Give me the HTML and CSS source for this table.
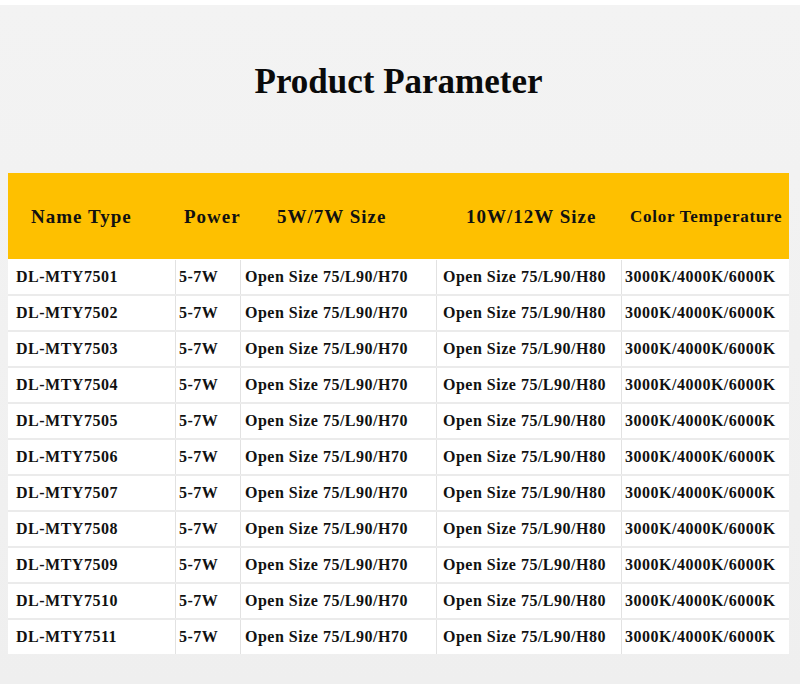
FILE: index.html
```html
<!DOCTYPE html>
<html lang="en">
<head>
<meta charset="utf-8">
<title>Product Parameter</title>
<link rel="stylesheet" href="styles.css">
</head>
<body>
<div class="page">
  <div class="title-wrap">
    <h1 class="title">Product Parameter</h1>
  </div>
  <div class="table">
    <div class="row head">
      <div class="cell c1">Name Type</div>
      <div class="cell c2">Power</div>
      <div class="cell c3">5W/7W Size</div>
      <div class="cell c4">10W/12W Size</div>
      <div class="cell c5 small">Color Temperature</div>
    </div>
    <div class="row body first">
      <div class="cell c1">DL-MTY7501</div><div class="cell c2">5-7W</div><div class="cell c3">Open Size 75/L90/H70</div><div class="cell c4">Open Size 75/L90/H80</div><div class="cell c5">3000K/4000K/6000K</div>
    </div>
    <div class="row body">
      <div class="cell c1">DL-MTY7502</div><div class="cell c2">5-7W</div><div class="cell c3">Open Size 75/L90/H70</div><div class="cell c4">Open Size 75/L90/H80</div><div class="cell c5">3000K/4000K/6000K</div>
    </div>
    <div class="row body">
      <div class="cell c1">DL-MTY7503</div><div class="cell c2">5-7W</div><div class="cell c3">Open Size 75/L90/H70</div><div class="cell c4">Open Size 75/L90/H80</div><div class="cell c5">3000K/4000K/6000K</div>
    </div>
    <div class="row body">
      <div class="cell c1">DL-MTY7504</div><div class="cell c2">5-7W</div><div class="cell c3">Open Size 75/L90/H70</div><div class="cell c4">Open Size 75/L90/H80</div><div class="cell c5">3000K/4000K/6000K</div>
    </div>
    <div class="row body">
      <div class="cell c1">DL-MTY7505</div><div class="cell c2">5-7W</div><div class="cell c3">Open Size 75/L90/H70</div><div class="cell c4">Open Size 75/L90/H80</div><div class="cell c5">3000K/4000K/6000K</div>
    </div>
    <div class="row body">
      <div class="cell c1">DL-MTY7506</div><div class="cell c2">5-7W</div><div class="cell c3">Open Size 75/L90/H70</div><div class="cell c4">Open Size 75/L90/H80</div><div class="cell c5">3000K/4000K/6000K</div>
    </div>
    <div class="row body">
      <div class="cell c1">DL-MTY7507</div><div class="cell c2">5-7W</div><div class="cell c3">Open Size 75/L90/H70</div><div class="cell c4">Open Size 75/L90/H80</div><div class="cell c5">3000K/4000K/6000K</div>
    </div>
    <div class="row body">
      <div class="cell c1">DL-MTY7508</div><div class="cell c2">5-7W</div><div class="cell c3">Open Size 75/L90/H70</div><div class="cell c4">Open Size 75/L90/H80</div><div class="cell c5">3000K/4000K/6000K</div>
    </div>
    <div class="row body">
      <div class="cell c1">DL-MTY7509</div><div class="cell c2">5-7W</div><div class="cell c3">Open Size 75/L90/H70</div><div class="cell c4">Open Size 75/L90/H80</div><div class="cell c5">3000K/4000K/6000K</div>
    </div>
    <div class="row body">
      <div class="cell c1">DL-MTY7510</div><div class="cell c2">5-7W</div><div class="cell c3">Open Size 75/L90/H70</div><div class="cell c4">Open Size 75/L90/H80</div><div class="cell c5">3000K/4000K/6000K</div>
    </div>
    <div class="row body">
      <div class="cell c1">DL-MTY7511</div><div class="cell c2">5-7W</div><div class="cell c3">Open Size 75/L90/H70</div><div class="cell c4">Open Size 75/L90/H80</div><div class="cell c5">3000K/4000K/6000K</div>
    </div>
  </div>
</div>
</body>
</html>
```
FILE: styles.css
```css
* { box-sizing: border-box; }
html, body { margin: 0; padding: 0; }
body {
  background: #f0f0f0;
  font-family: "Liberation Serif", "Times New Roman", serif;
  color: #111;
  width: 800px;
  height: 684px;
  overflow: hidden;
}
.page {
  border-top: 5px solid #ffffff;
  background: linear-gradient(#f3f3f3, #efefef);
  height: 684px;
  padding: 0 11px 0 8px;
}
.title-wrap {
  padding-top: 57px;
  height: 168px;
  text-align: center;
}
.title {
  margin: 0;
  font-size: 35px;
  line-height: 40px;
  font-weight: bold;
  color: #0a0a0a;
}
.table {
  width: 781px;
}
.row {
  display: grid;
  grid-template-columns: 167px 65px 196px 185px 168px;
}
.head {
  height: 86px;
  background: #fec000;
}
.head .cell {
  display: flex;
  align-items: center;
  font-size: 19px;
  letter-spacing: 1px;
  font-weight: bold;
  padding-top: 2px;
}
.head .c1 { padding-left: 23px; }
.head .c2 { padding-left: 9px; }
.head .c3 { padding-left: 37px; }
.head .c4 { padding-left: 30px; }
.head .c5 { padding-left: 9px; }
.head .small { font-size: 17px; letter-spacing: 0.75px; }
.body {
  height: 36px;
  background: #ffffff;
  border-top: 2px solid #ebebeb;
}
.body.first {
  height: 35px;
  border-top: none;
  padding-top: 1px;
}
.body .cell {
  display: flex;
  align-items: center;
  font-size: 16px;
  letter-spacing: 0.5px;
  font-weight: bold;
  white-space: nowrap;
}
.body .cell + .cell { border-left: 1px solid #e2e2e2; }
.body .c1 { padding-left: 8px; }
.body .c2 { padding-left: 3px; }
.body .c3 { padding-left: 4px; }
.body .c4 { padding-left: 6px; }
.body .c5 { padding-left: 3px; }
```
